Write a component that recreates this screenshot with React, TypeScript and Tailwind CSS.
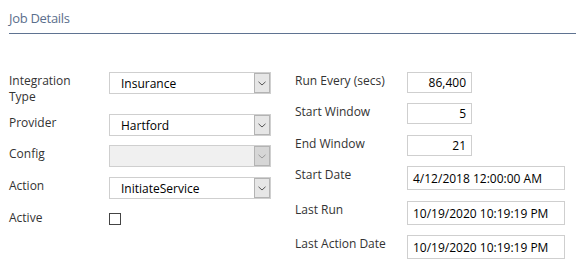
import React from "react";

function Chevron({ color = "#555" }: { color?: string }) {
  return (
    <svg width="8" height="5" viewBox="0 0 8 5" fill="none">
      <path d="M0.5 0.8 L4 4 L7.5 0.8" stroke={color} strokeWidth="1" />
    </svg>
  );
}

function Select({ value, disabled }: { value?: string; disabled?: boolean }) {
  return (
    <div
      className={`w-[162px] h-[22px] border border-[#cfcfcf] flex items-stretch ${
        disabled ? "bg-[#f0f0f0]" : "bg-white"
      }`}
    >
      <div className="flex-1 pl-[11px] pt-[3px] text-[12px] leading-[16px] text-black">{value}</div>
      <div
        className={`w-[16px] flex items-center justify-center border border-[#b3b3b3] ${
          disabled ? "bg-[#d6d6d6]" : "bg-[#e6e6e6]"
        }`}
      >
        <Chevron color={disabled ? "#999" : "#555"} />
      </div>
    </div>
  );
}

function LeftRow({ label, children, className = "" }: { label: React.ReactNode; children: React.ReactNode; className?: string }) {
  return (
    <div className={`flex items-start ${className}`}>
      <div className="w-[100px] text-[12px] leading-[16px] pt-[1px] text-[#333]">{label}</div>
      {children}
    </div>
  );
}

function RightRow({
  label,
  value,
  wide,
  className = "",
}: {
  label: string;
  value: string;
  wide?: boolean;
  className?: string;
}) {
  return (
    <div className={`flex items-start ${className}`}>
      <div className="w-[112px] text-[12px] leading-[16px] pt-[1px] text-[#333]">{label}</div>
      {wide ? (
        <div className="w-[158px] h-[24px] border border-[#cfcfcf] pl-[5px] pt-[4px] text-[12px] leading-[16px] text-black">
          {value}
        </div>
      ) : (
        <div className="w-[65px] h-[21px] border border-[#cfcfcf] pr-[5px] pt-[2px] text-right text-[12px] leading-[16px] text-black">
          {value}
        </div>
      )}
    </div>
  );
}

export default function App() {
  return (
    <div className="w-[576px] h-[270px] bg-white pl-[9px] font-['Open_Sans',sans-serif] overflow-hidden">
      <div className="h-[34px] pt-[9px] text-[13px] leading-[18px] tracking-[-0.3px] text-[#5a6e8c] border-b-[1.5px] border-[#5f7391]">
        Job Details
      </div>
      <div className="flex mt-[38px]">
        <div className="w-[286px] flex flex-col">
          <LeftRow label={<>Integration<br />Type</>}>
            <Select value="Insurance" />
          </LeftRow>
          <LeftRow label="Provider" className="mt-[9px]">
            <Select value="Hartford" />
          </LeftRow>
          <LeftRow label="Config" className="mt-[9px]">
            <Select disabled />
          </LeftRow>
          <LeftRow label="Action" className="mt-[10px]">
            <Select value="InitiateService" />
          </LeftRow>
          <LeftRow label="Active" className="mt-[10px]">
            <div className="mt-[4px] w-[12px] h-[12px] border border-[#444] bg-white" />
          </LeftRow>
        </div>
        <div className="flex flex-col">
          <RightRow label="Run Every (secs)" value="86,400" />
          <RightRow label="Start Window" value="5" className="mt-[10px]" />
          <RightRow label="End Window" value="21" className="mt-[11px]" />
          <RightRow label="Start Date" value="4/12/2018 12:00:00 AM" wide className="mt-[10px]" />
          <RightRow label="Last Run" value="10/19/2020 10:19:19 PM" wide className="mt-[11px]" />
          <RightRow label="Last Action Date" value="10/19/2020 10:19:19 PM" wide className="mt-[10px]" />
        </div>
      </div>
    </div>
  );
}
